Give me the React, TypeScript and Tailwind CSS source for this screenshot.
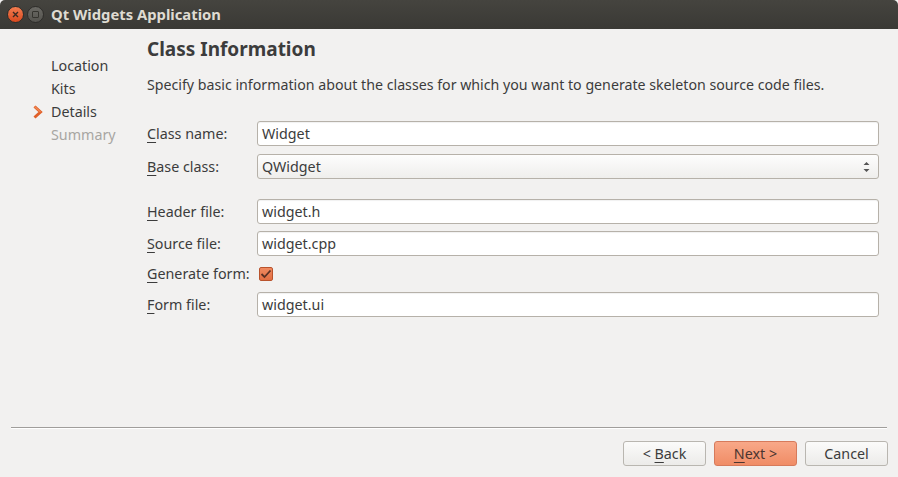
import React from "react";

const font = { fontFamily: '"Noto Sans", "Open Sans", sans-serif' };

const Mn = ({ k, rest }: { k: string; rest: string }) => (
  <span>
    <span className="underline underline-offset-[3px] decoration-1">{k}</span>
    {rest}
  </span>
);

const Field = ({ value }: { value: string }) => (
  <div className="flex-1 h-[25px] rounded-[3px] border border-[#b6b1a9] bg-white flex items-center px-[4px] text-[14.3px] text-[#3c3c3c] shadow-[inset_0_1px_1px_rgba(0,0,0,0.06)]">
    {value}
  </div>
);

const Row = ({ label, mn, children, className = "" }: { label: string; mn: string; children: React.ReactNode; className?: string }) => (
  <div className={`flex items-center ${className}`}>
    <div className="w-[110px] shrink-0 text-[14.3px] text-[#3c3c3c]">
      <Mn k={mn} rest={label} />
    </div>
    {children}
  </div>
);

const Button = ({ children, primary = false }: { children: React.ReactNode; primary?: boolean }) => (
  <div
    className={
      primary
        ? "w-[83px] h-[25px] rounded-[3px] border border-[#d67a5b] bg-gradient-to-b from-[#f8a888] to-[#f08c66] flex items-center justify-center text-[14.3px] text-[#4b3530]"
        : "w-[83px] h-[25px] rounded-[3px] border border-[#b9b6b0] bg-gradient-to-b from-[#fbfbfa] to-[#ecebe9] flex items-center justify-center text-[14.3px] text-[#3c3c3c]"
    }
  >
    <span>{children}</span>
  </div>
);

export default function App() {
  return (
    <div style={font} className="w-[898px] h-[477px] bg-[#f2f1f0] flex flex-col overflow-hidden">
      {/* title bar */}
      <div className="h-[29px] shrink-0 bg-gradient-to-b from-[#45443f] to-[#3a3935] flex items-center rounded-t-[5px]">
        <div className="ml-[7px] w-[17px] h-[17px] rounded-full bg-gradient-to-b from-[#f27c4f] to-[#d9491d] border border-[#2e2d2a] flex items-center justify-center">
          <svg width="7" height="7" viewBox="0 0 7 7">
            <path d="M1 1 L6 6 M6 1 L1 6" stroke="#3b2a22" strokeWidth="1.4" />
          </svg>
        </div>
        <div className="ml-[3px] w-[17px] h-[17px] rounded-full bg-gradient-to-b from-[#6a6964] to-[#55544f] border border-[#2e2d2a] flex items-center justify-center">
          <div className="w-[7px] h-[7px] border border-[#35342f] rounded-[1px]" />
        </div>
        <div className="ml-[7px] text-[14.8px] font-bold text-[#dfdbd2]">Qt Widgets Application</div>
      </div>

      {/* main */}
      <div className="h-[398px] shrink-0 flex">
        <div className="w-[147px] shrink-0 pt-[25px] text-[14.3px] leading-[23px]">
          <div className="pl-[51px] text-[#3c3c3c]">Location</div>
          <div className="pl-[51px] text-[#3c3c3c]">Kits</div>
          <div className="flex items-center text-[#3c3c3c]">
            <svg className="ml-[33px] mr-[8px]" width="10" height="14" viewBox="0 0 10 14">
              <path d="M1.5 1.5 L7.5 7 L1.5 12.5" fill="none" stroke="#e0602a" strokeWidth="3" strokeLinejoin="miter" />
              <path d="M1.5 1.5 L7.5 7" fill="none" stroke="#f08a55" strokeWidth="1.2" />
            </svg>
            Details
          </div>
          <div className="pl-[51px] text-[#a8a6a2]">Summary</div>
        </div>

        <div className="flex-1 pr-[19px] flex flex-col">
          <div className="pt-[8px] h-[32px] text-[19px] font-bold text-[#3c3c3c] leading-[24px] flex items-center">Class Information</div>
          <div className="mt-[14px] text-[14.2px] leading-[20px] text-[#3c3c3c]">
            Specify basic information about the classes for which you want to generate skeleton source code files.
          </div>
          <Row mn="C" label="lass name:" className="mt-[26px]">
            <Field value="Widget" />
          </Row>
          <Row mn="B" label="ase class:" className="mt-[8px]">
            <div className="flex-1 h-[25px] rounded-[3px] border border-[#b6b1a9] bg-gradient-to-b from-[#fdfdfd] to-[#efeeec] flex items-center px-[4px] text-[14.3px] text-[#3c3c3c]">
              <span className="flex-1">QWidget</span>
              <svg width="7" height="12" viewBox="0 0 7 12" className="mr-[4px]">
                <path d="M0.5 4 L3.5 1 L6.5 4 Z M0.5 8 L3.5 11 L6.5 8 Z" fill="#555" />
              </svg>
            </div>
          </Row>
          <Row mn="H" label="eader file:" className="mt-[20px]">
            <Field value="widget.h" />
          </Row>
          <Row mn="S" label="ource file:" className="mt-[7px]">
            <Field value="widget.cpp" />
          </Row>
          <Row mn="G" label="enerate form:" className="mt-[5px] h-[25px]">
            <div className="ml-[2px] w-[14px] h-[14px] rounded-[2px] border border-[#b9532c] bg-gradient-to-b from-[#f08a60] to-[#e36e42] flex items-center justify-center">
              <svg width="12" height="10" viewBox="0 0 12 10">
                <path d="M1.5 5 L4.5 8 L10.5 1.5" fill="none" stroke="#5a3024" strokeWidth="1.8" />
              </svg>
            </div>
          </Row>
          <Row mn="F" label="orm file:" className="mt-[6px]">
            <Field value="widget.ui" />
          </Row>
        </div>
      </div>

      {/* separator */}
      <div className="mx-[11px] h-[1px] bg-[#a09e9b] shrink-0" />
      <div className="mx-[11px] h-[1px] bg-white shrink-0" />

      {/* buttons */}
      <div className="pt-[12px] pr-[10px] flex justify-end gap-[8px]">
        <Button>
          &lt;&nbsp;
          <Mn k="B" rest="ack" />
        </Button>
        <Button primary>
          <Mn k="N" rest="ext &gt;" />
        </Button>
        <Button>Cancel</Button>
      </div>
    </div>
  );
}
